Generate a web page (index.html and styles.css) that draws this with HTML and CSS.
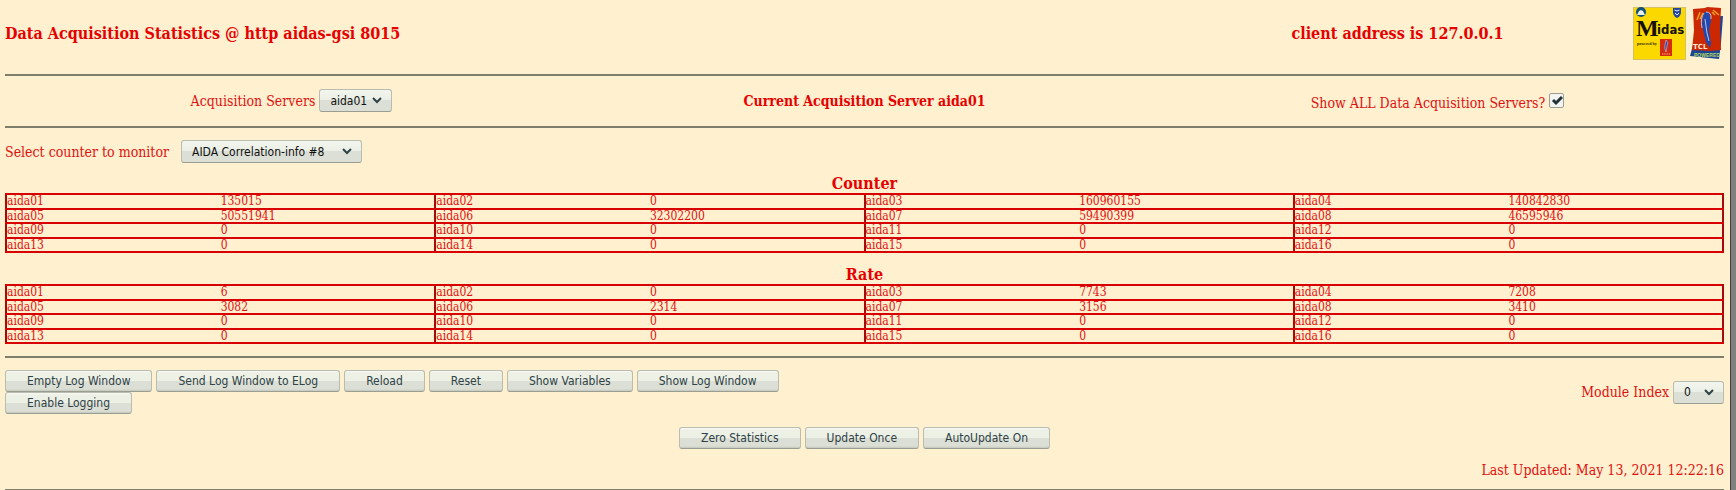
FILE: index.html
```html
<!DOCTYPE html>
<html lang="en">
<head>
<meta charset="utf-8">
<title>Data Acquisition Statistics</title>
<link rel="stylesheet" href="styles.css">
</head>
<body>
<main class="page">
  <header class="header">
    <h1 class="heading">Data Acquisition Statistics @ http aidas-gsi 8015</h1>
    <h2 class="heading client">client address is 127.0.0.1</h2>
    <div class="logos">
      <svg class="logo-midas" viewBox="0 0 53 53" role="img" aria-label="Midas">
        <rect width="53" height="53" fill="#fbd800"/>
        <path d="M.5 53V.5H53M52.500 0V52.500H0" fill="none" stroke="#d8c060"/>
        <circle cx="8" cy="5" r="5" fill="#0f4f78"/>
        <path d="M4 8l2-4 2-1 2 1 2 4z" fill="#e8f0e8"/>
        <path d="M40 1h8v5q-1 4-4 5-3-1-4-5z" fill="#2448a0"/>
        <path d="M41.500 3l2.500 1 2.500-1M42 6l2 2 2-2" fill="none" stroke="#e8ecf8"/>
        <text x="3" y="29" class="midas-cap">M</text>
        <text x="24" y="27" class="midas-rest">idas</text>
        <text x="4" y="38" class="midas-small">powered by</text>
        <rect x="27" y="32" width="12" height="17" fill="#d42a10"/>
        <path d="M33 33q3 2 1 6l-1 6q-2-4-1-7z" fill="#2348b0" stroke="#e0e0f0" stroke-width=".5"/>
        <path d="M29 47h8" stroke="#f0b070" stroke-dasharray="1.500 .7"/>
      </svg>
      <svg class="logo-tcl" viewBox="0 0 34 53" role="img" aria-label="TCL Powered">
        <path d="M8 10l25-1-2 27-2 16L0 49l3-11z" fill="#1c4596"/>
        <path d="M3 2l12-1 2-1 14 1-1 21 1 21-11 1-18-1 2-20z" fill="#cc2800"/>
        <path d="M13 7q3-4 6-1l2 8-2 9 2 13-1 5-4-6-2-8-2-9z" fill="#2148b0"/>
        <path d="M14 6q-4 5-2 15M15 12l2 14 2 8M16 5q6 0 5 7" fill="none" stroke="#b8c4e0"/>
        <path d="M7 13l3-8M10 12l3-6M22 5l3 3M23 3l6 5" stroke="#f0a020" stroke-width="1.500"/>
        <text x="3" y="42" class="tcl-name">TCL</text>
        <text x="4" y="50" class="tcl-powered">POWERED</text>
      </svg>
    </div>
  </header>
  <hr>
  <section class="servers">
    <div>
      <label for="server">Acquisition Servers</label>
      <select id="server" class="select"><option>aida01</option></select>
    </div>
    <strong>Current Acquisition Server aida01</strong>
    <div class="show-all">
      <label for="all">Show ALL Data Acquisition Servers?</label>
      <input id="all" class="check" type="checkbox" checked>
    </div>
  </section>
  <hr>
  <section class="monitor">
    <label for="counter">Select counter to monitor</label>
    <select id="counter" class="select select-wide"><option>AIDA Correlation-info #8</option></select>
  </section>
  <table class="stats">
    <caption class="heading">Counter</caption>
    <tbody>
    <tr><td>aida01</td><td>135015</td><td>aida02</td><td>0</td><td>aida03</td><td>160960155</td><td>aida04</td><td>140842830</td></tr>
    <tr><td>aida05</td><td>50551941</td><td>aida06</td><td>32302200</td><td>aida07</td><td>59490399</td><td>aida08</td><td>46595946</td></tr>
    <tr><td>aida09</td><td>0</td><td>aida10</td><td>0</td><td>aida11</td><td>0</td><td>aida12</td><td>0</td></tr>
    <tr><td>aida13</td><td>0</td><td>aida14</td><td>0</td><td>aida15</td><td>0</td><td>aida16</td><td>0</td></tr>
    </tbody>
  </table>
  <table class="stats">
    <caption class="heading">Rate</caption>
    <tbody>
    <tr><td>aida01</td><td>6</td><td>aida02</td><td>0</td><td>aida03</td><td>7743</td><td>aida04</td><td>7208</td></tr>
    <tr><td>aida05</td><td>3082</td><td>aida06</td><td>2314</td><td>aida07</td><td>3156</td><td>aida08</td><td>3410</td></tr>
    <tr><td>aida09</td><td>0</td><td>aida10</td><td>0</td><td>aida11</td><td>0</td><td>aida12</td><td>0</td></tr>
    <tr><td>aida13</td><td>0</td><td>aida14</td><td>0</td><td>aida15</td><td>0</td><td>aida16</td><td>0</td></tr>
    </tbody>
  </table>
  <hr>
  <section class="actions">
    <div class="buttons">
      <button type="button" class="button">Empty Log Window</button>
      <button type="button" class="button">Send Log Window to ELog</button>
      <button type="button" class="button">Reload</button>
      <button type="button" class="button">Reset</button>
      <button type="button" class="button">Show Variables</button>
      <button type="button" class="button">Show Log Window</button>
      <button type="button" class="button">Enable Logging</button>
    </div>
    <div>
      <label for="module">Module Index</label>
      <select id="module" class="select select-short"><option>0</option></select>
    </div>
  </section>
  <section class="buttons updates">
    <button type="button" class="button">Zero Statistics</button>
    <button type="button" class="button">Update Once</button>
    <button type="button" class="button">AutoUpdate On</button>
  </section>
  <p class="updated">Last Updated: May 13, 2021 12:22:16</p>
  <hr>
</main>
</body>
</html>
```
FILE: styles.css
```css
* { box-sizing: border-box; }

html { background: #808080; overflow: hidden; }

body {
  margin: 0 5px 0 0;
  min-height: 100vh;
  border-right: 1px solid #404040;
  background: #fff0cf;
  color: #e01010;
  font: 14px/18px "DejaVu Serif Condensed", "DejaVu Serif", serif;
}

.page { padding: 7px 6px 0 5px; }

hr {
  height: 2px;
  margin: 0;
  border: 0;
  background: #7f7d6c;
}

.heading {
  margin: 0;
  color: #e60000;
  font-size: 16px;
  font-weight: bold;
  line-height: 19px;
}

.header {
  display: grid;
  grid-template-columns: 67.3% 1fr auto;
  align-items: center;
  padding-bottom: 14px;
}
.client { text-align: center; }
.logos { display: flex; gap: 4px; }
.logo-midas { width: 53px; height: 53px; }
.logo-tcl { width: 34px; height: 53px; }
.midas-cap { font: bold 24px "Liberation Serif", serif; fill: #151008; }
.midas-rest { font: bold 13px "DejaVu Sans Condensed", sans-serif; fill: #151008; }
.midas-small { font: bold 4px "Liberation Serif", serif; fill: #302800; }
.tcl-name { font: bold 7px "DejaVu Sans", sans-serif; fill: #ffe8d8; }
.tcl-powered { font: bold 5px "Liberation Sans", sans-serif; fill: #b8d860; }

.servers {
  display: grid;
  grid-template-columns: repeat(3, 1fr);
  align-items: center;
  padding: 13px 0 14px;
  text-align: center;
}
.servers strong { color: #e60000; }
.servers > div,
.monitor,
.actions > div:last-child {
  display: flex;
  align-items: center;
  justify-content: center;
  gap: 4px;
}
.servers .show-all { align-items: flex-end; padding-top: 3px; }

.select,
.button {
  border: 1px solid #b9bdb0;
  border-bottom-color: #9a9e92;
  border-radius: 3px;
  font: 12px/14px "DejaVu Sans Condensed", "DejaVu Sans", sans-serif;
}
.select {
  appearance: none;
  width: 73px;
  height: 23px;
  padding: 0 10px;
  color: #101010;
  background:
    url("data:image/svg+xml,%3Csvg xmlns='http://www.w3.org/2000/svg' width='10' height='7'%3E%3Cpath d='M1 1l4 4 4-4' fill='none' stroke='%232e4247' stroke-width='2'/%3E%3C/svg%3E") no-repeat right 9px center,
    linear-gradient(#f3f6ee, #ebeee4 50%, #dcdfd5 50%, #dcdfd5);
}
.select-wide { width: 181px; }
.select-short { width: 51px; }

.check {
  appearance: none;
  width: 15px;
  height: 15px;
  margin: 0 0 4px;
  border: 1px solid #9a9e92;
  border-radius: 2px;
  background: url("data:image/svg+xml,%3Csvg xmlns='http://www.w3.org/2000/svg' viewBox='0 0 13 13'%3E%3Cpath d='M3 6l3 3 6-6' fill='none' stroke='%23213238' stroke-width='3'/%3E%3C/svg%3E") center / 13px 13px #f4f5f0;
}

.monitor {
  justify-content: flex-start;
  gap: 12px;
  padding: 12px 0 11px;
}

.stats {
  width: 100%;
  height: 60px;
  margin-bottom: 12px;
  border-collapse: collapse;
  table-layout: fixed;
  font-size: 12px;
  line-height: 12px;
}
.stats td {
  padding: 0;
  border: 2px solid #d80000;
  border-left-width: 0;
  border-right-width: 0;
}
.stats td:nth-child(odd) { border-left: 2px solid #a80808; }
.stats td:last-child { border-right: 2px solid #a80808; }

.actions {
  display: flex;
  align-items: center;
  justify-content: space-between;
  padding: 12px 0 13px;
}
.buttons {
  display: flex;
  flex-wrap: wrap;
  column-gap: 4px;
}
.actions .buttons { width: 50%; }
.updates { justify-content: center; }
.button {
  height: 22px;
  padding: 0 21px;
  color: #2e4247;
  background: linear-gradient(#f8faf4, #edf0e5 10%, #edf0e5 48%, #dcdfd5 48%, #dcdfd5 90%, #c4c7bc);
}

.updated {
  margin: 12px 0 10px;
  text-align: right;
}
```
